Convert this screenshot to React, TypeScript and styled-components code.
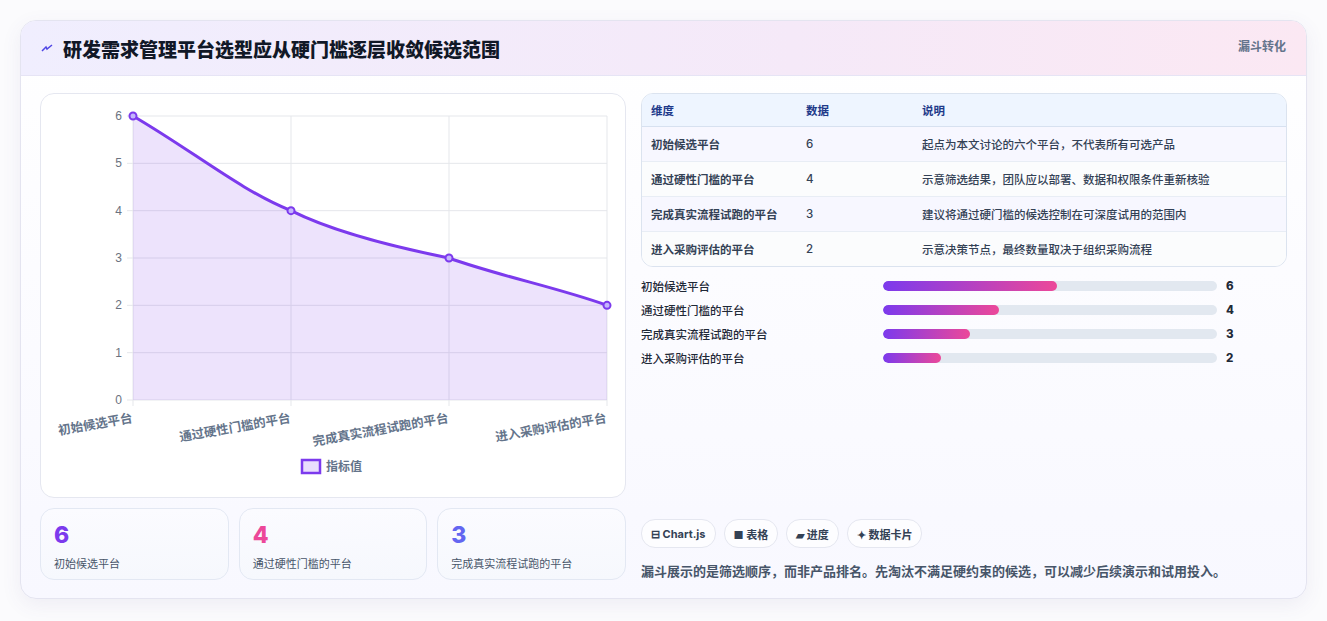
import React from "react";
import styled, { createGlobalStyle } from "styled-components";

const GlobalStyle = createGlobalStyle`
  html, body { margin: 0; padding: 0; background: #fbfbfd; }
  body {
    font-family: "Inter", "Noto Sans CJK SC", "Noto Sans", sans-serif;
    color: #1f2937;
  }
`;

// Data
const steps = [
  { name: "初始候选平台", value: 6, note: "起点为本文讨论的六个平台，不代表所有可选产品" },
  { name: "通过硬性门槛的平台", value: 4, note: "示意筛选结果，团队应以部署、数据和权限条件重新核验" },
  { name: "完成真实流程试跑的平台", value: 3, note: "建议将通过硬门槛的候选控制在可深度试用的范围内" },
  { name: "进入采购评估的平台", value: 2, note: "示意决策节点，最终数量取决于组织采购流程" },
];

// Components
const Page = styled.div`
  padding: 20px 20px 21px 20px;
`;

const Card = styled.div`
  background: linear-gradient(180deg, #ffffff 0%, #f8f8ff 100%);
  border: 1px solid #e4e4f0;
  border-radius: 16px;
  box-shadow: 0 6px 20px rgba(90, 80, 140, 0.08);
  overflow: hidden;
`;

const Header = styled.div`
  height: 54px;
  display: flex;
  align-items: center;
  justify-content: space-between;
  padding: 0 20px;
  background: linear-gradient(90deg, #f0eefe 0%, #f5e9f8 60%, #fbe8f3 100%);
  border-bottom: 1px solid #e6e4f5;
`;

const Title = styled.h1`
  margin: 0;
  font-size: 19px;
  font-weight: 800;
  color: #111827;
  display: flex;
  align-items: center;
  gap: 10px;
`;

const Tag = styled.span`
  font-size: 12px;
  font-weight: 700;
  color: #64748b;
  align-self: flex-start;
  margin-top: 16px;
`;

const Body = styled.div`
  display: grid;
  grid-template-columns: 586px 1fr;
  gap: 15px;
  padding: 17px 19px 18px 19px;
`;

const Left = styled.div`
  display: flex;
  flex-direction: column;
  gap: 10px;
`;

const ChartCard = styled.div`
  height: 403px;
  background: #fff;
  border: 1px solid #e5e7f0;
  border-radius: 14px;
`;

const Stats = styled.div`
  display: grid;
  grid-template-columns: repeat(3, 1fr);
  gap: 10px;
`;

const Stat = styled.div`
  height: 72px;
  box-sizing: border-box;
  padding: 12px 13px;
  border: 1px solid #e3e8f3;
  border-radius: 14px;
  background: linear-gradient(180deg, #fbfbff, #f6f8fd);
`;

const StatValue = styled.div<{ $color: string }>`
  font-size: 23px;
  font-weight: 800;
  line-height: 28px;
  color: ${(p) => p.$color};
`;

const StatLabel = styled.div`
  font-size: 11px;
  color: #475569;
  margin-top: 6px;
`;

const Right = styled.div`
  display: flex;
  flex-direction: column;
`;

const Table = styled.table`
  width: 100%;
  table-layout: fixed;
  border-collapse: separate;
  border-spacing: 0;
  border: 1px solid #dbe3ef;
  border-radius: 12px;
  overflow: hidden;
  font-size: 11.5px;
`;

const Th = styled.th<{ $w?: number }>`
  text-align: left;
  font-weight: 700;
  color: #1e3a8a;
  background: #eef5ff;
  height: 32px;
  padding: 0 9px;
  border-bottom: 1px solid #d7e1f0;
  width: ${(p) => (p.$w ? p.$w + "px" : "auto")};
`;

const Td = styled.td<{ $bold?: boolean }>`
  height: 34px;
  padding: 0 9px;
  color: #334155;
  font-weight: ${(p) => (p.$bold ? 600 : 500)};
  white-space: nowrap;
  border-bottom: 1px solid #e8edf5;
  tr:last-child & { border-bottom: none; }
  tr:nth-child(odd) & { background: #f7f7ff; }
  tr:nth-child(even) & { background: #fbfcfd; }
`;

const Bars = styled.div`
  display: flex;
  flex-direction: column;
  gap: 8px;
  margin-top: 11px;
`;

const BarRow = styled.div`
  display: grid;
  grid-template-columns: 242px 334px 1fr;
  align-items: center;
  height: 16px;
  font-size: 11.5px;
  color: #1f2937;
  font-weight: 500;
`;

const Track = styled.div`
  height: 10px;
  border-radius: 5px;
  background: #e2e8f0;
  overflow: hidden;
`;

const Fill = styled.div`
  height: 100%;
  border-radius: 5px;
  background: linear-gradient(90deg, #7c3aed, #ec4899);
`;

const BarValue = styled.span`
  font-weight: 800;
  padding-left: 9px;
`;

const Spacer = styled.div`
  flex: 1;
`;

const Chips = styled.div`
  display: flex;
  gap: 8px;
`;

const Chip = styled.span`
  display: inline-flex;
  align-items: center;
  gap: 3px;
  height: 27px;
  padding: 0 9px;
  border: 1px solid #e5e7f0;
  border-radius: 14px;
  background: #fdfdff;
  font-size: 11px;
  font-weight: 700;
  color: #334155;
`;

const Note = styled.p`
  margin: 13px 0 0 0;
  font-size: 13px;
  color: #475569;
  font-weight: 600;
`;

// Chart geometry (card-local)
const plot = { x0: 92, x1: 566, y0: 22, y1: 306 };
const px = (i: number) => plot.x0 + ((plot.x1 - plot.x0) * i) / 3;
const py = (v: number) => plot.y1 - ((plot.y1 - plot.y0) * v) / 6;

function LineChart() {
  const pts = steps.map((s, i) => [px(i), py(s.value)]);
  const line = `M${pts[0][0]},${pts[0][1]} C${pts[0][0] + 60},${pts[0][1] + 35} ${pts[1][0] - 50},${pts[1][1] - 20} ${pts[1][0]},${pts[1][1]} C${pts[1][0] + 40},${pts[1][1] + 20} ${pts[2][0] - 60},${pts[2][1] - 12} ${pts[2][0]},${pts[2][1]} C${pts[2][0] + 50},${pts[2][1] + 18} ${pts[3][0] - 50},${pts[3][1] - 18} ${pts[3][0]},${pts[3][1]}`;
  const area = `${line} L${plot.x1},${plot.y1} L${plot.x0},${plot.y1} Z`;
  return (
    <svg width="585" height="401" style={{ display: "block" }}>
      {[0, 1, 2, 3, 4, 5, 6].map((v) => (
        <g key={v}>
          <line x1={plot.x0 - 6} x2={plot.x1} y1={py(v)} y2={py(v)} stroke="#e5e7eb" />
          <text x={plot.x0 - 11} y={py(v) + 4} fontSize="12" fill="#6b7280" textAnchor="end" fontFamily="Liberation Sans, sans-serif">{v}</text>
        </g>
      ))}
      {[0, 1, 2, 3].map((i) => (
        <line key={i} x1={px(i)} x2={px(i)} y1={plot.y0} y2={plot.y1 + 6} stroke="#e5e7eb" />
      ))}
      <path d={area} fill="rgba(124,58,237,0.14)" />
      <path d={line} fill="none" stroke="#7c3aed" strokeWidth="3" />
      {pts.map((p, i) => (
        <circle key={i} cx={p[0]} cy={p[1]} r="3.5" fill="#c4b5fd" stroke="#7c3aed" strokeWidth="2" />
      ))}
      {steps.map((s, i) => (
        <text key={i} x={px(i)} y={plot.y1 + 22} fontSize="12.5" fontWeight="700" fill="#64748b" textAnchor="end" transform={`rotate(-10 ${px(i)} ${plot.y1 + 22})`}>{s.name}</text>
      ))}
      <rect x="261" y="366" width="18" height="13" fill="#e9ddfd" stroke="#7c3aed" strokeWidth="2.5" />
      <text x="285" y="377" fontSize="12" fontWeight="600" fill="#64748b">指标值</text>
    </svg>
  );
}

export default function App() {
  const colors = ["#7c3aed", "#ec4899", "#6366f1"];
  return (
    <Page>
      <GlobalStyle />
      <Card>
        <Header>
          <Title>
            <svg width="12" height="10" viewBox="0 0 12 10">
              <path d="M1 8 L5 4 L6 6 L11 2" fill="none" stroke="#4f46e5" strokeWidth="1.5" />
            </svg>
            研发需求管理平台选型应从硬门槛逐层收敛候选范围
          </Title>
          <Tag>漏斗转化</Tag>
        </Header>
        <Body>
          <Left>
            <ChartCard>
              <LineChart />
            </ChartCard>
            <Stats>
              {steps.slice(0, 3).map((s, i) => (
                <Stat key={s.name}>
                  <StatValue $color={colors[i]}>{s.value}</StatValue>
                  <StatLabel>{s.name}</StatLabel>
                </Stat>
              ))}
            </Stats>
          </Left>
          <Right>
            <Table>
              <thead>
                <tr>
                  <Th $w={137}>维度</Th>
                  <Th $w={98}>数据</Th>
                  <Th>说明</Th>
                </tr>
              </thead>
              <tbody>
                {steps.map((s) => (
                  <tr key={s.name}>
                    <Td $bold>{s.name}</Td>
                    <Td>{s.value}</Td>
                    <Td>{s.note}</Td>
                  </tr>
                ))}
              </tbody>
            </Table>
            <Bars>
              {steps.map((s) => (
                <BarRow key={s.name}>
                  <span>{s.name}</span>
                  <Track>
                    <Fill style={{ width: `${s.value * 8.67}%` }} />
                  </Track>
                  <BarValue>{s.value}</BarValue>
                </BarRow>
              ))}
            </Bars>
            <Spacer />
            <Chips>
              <Chip>⊟ Chart.js</Chip>
              <Chip>■ 表格</Chip>
              <Chip>▰ 进度</Chip>
              <Chip>✦ 数据卡片</Chip>
            </Chips>
            <Note>漏斗展示的是筛选顺序，而非产品排名。先淘汰不满足硬约束的候选，可以减少后续演示和试用投入。</Note>
          </Right>
        </Body>
      </Card>
    </Page>
  );
}
